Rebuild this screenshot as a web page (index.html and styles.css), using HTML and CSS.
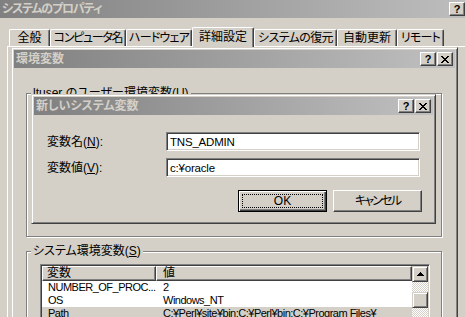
FILE: index.html
```html
<!DOCTYPE html>
<html lang="ja">
<head>
<meta charset="utf-8">
<title>システムのプロパティ</title>
<link rel="stylesheet" href="styles.css">
</head>
<body>
<div class="win">
  <div class="caption main-cap">
    <span class="cap-text tight">システムのプロパティ</span>
    <span class="cap-btns">
      <span class="cbtn help">?</span>
      <span class="cbtn"><svg width="8" height="7" viewBox="0 0 8 7"><path d="M0 0h2v1H0zM6 0h2v1H6zM1 1h2v1H1zM5 1h2v1H5zM2 2h4v1H2zM3 3h2v1H3zM2 4h4v1H2zM1 5h2v1H1zM5 5h2v1H5zM0 6h2v1H0zM6 6h2v1H6z" fill="#000"/></svg></span>
    </span>
  </div>
  <div class="tabs">
    <div class="tab t1">全般</div>
    <div class="tab t2">コンピュータ名</div>
    <div class="tab t3">ハードウェア</div>
    <div class="tab t4 sel">詳細設定</div>
    <div class="tab t5">システムの復元</div>
    <div class="tab t6">自動更新</div>
    <div class="tab t7">リモート</div>
  </div>
  <div class="panel"></div>
</div>

<div class="dlg env">
  <div class="caption">
    <span class="cap-text">環境変数</span>
    <span class="cap-btns">
      <span class="cbtn help">?</span>
      <span class="cbtn"><svg width="8" height="7" viewBox="0 0 8 7"><path d="M0 0h2v1H0zM6 0h2v1H6zM1 1h2v1H1zM5 1h2v1H5zM2 2h4v1H2zM3 3h2v1H3zM2 4h4v1H2zM1 5h2v1H1zM5 5h2v1H5zM0 6h2v1H0zM6 6h2v1H6z" fill="#000"/></svg></span>
    </span>
  </div>
  <div class="env-body">
    <div class="group user">
      <span class="legend">ltuser のユーザー環境変数(<u>U</u>)</span>
    </div>
    <div class="group sys">
      <span class="legend">システム環境変数(<u>S</u>)</span>
      <div class="list">
        <div class="lv">
          <div class="lv-head">
            <span class="hcell h1">変数</span>
            <span class="hcell h2">値</span>
          </div>
          <div class="lv-row"><span class="c1">NUMBER_OF_PROC...</span><span class="c2">2</span></div>
          <div class="lv-row"><span class="c1">OS</span><span class="c2">Windows_NT</span></div>
          <div class="lv-row sel"><span class="c1">Path</span><span class="c2">C:¥Perl¥site¥bin;C:¥Perl¥bin;C:¥Program Files¥</span></div>
        </div>
        <div class="vscroll">
          <div class="sbtn"><svg width="7" height="4" viewBox="0 0 7 4"><path d="M3 0h1v1h1v1h1v1h1v1H0V3h1V2h1V1h1z" fill="#000"/></svg></div>
          <div class="track"></div>
          <div class="thumb"></div>
          <div class="track rest"></div>
        </div>
      </div>
    </div>
  </div>
</div>

<div class="dlg newvar">
  <div class="caption">
    <span class="cap-text">新しいシステム変数</span>
    <span class="cap-btns">
      <span class="cbtn help">?</span>
      <span class="cbtn"><svg width="8" height="7" viewBox="0 0 8 7"><path d="M0 0h2v1H0zM6 0h2v1H6zM1 1h2v1H1zM5 1h2v1H5zM2 2h4v1H2zM3 3h2v1H3zM2 4h4v1H2zM1 5h2v1H1zM5 5h2v1H5zM0 6h2v1H0zM6 6h2v1H6z" fill="#000"/></svg></span>
    </span>
  </div>
  <div class="form">
    <label class="lbl">変数名(<u>N</u>):</label>
    <div class="edit">TNS_ADMIN</div>
    <label class="lbl">変数値(<u>V</u>):</label>
    <div class="edit">c:¥oracle</div>
  </div>
  <div class="buttons">
    <div class="btn default"><span class="focus">OK</span></div>
    <div class="btn cancel">キャンセル</div>
  </div>
</div>
</body>
</html>
```

FILE: styles.css
```css
* { box-sizing: border-box; margin: 0; padding: 0; }
html, body { width: 465px; height: 317px; overflow: hidden; }
body {
  background: #d4d0c8;
  font-family: "Liberation Sans", "Noto Sans CJK JP", sans-serif;
  font-feature-settings: "palt";
  font-size: 12px;
  line-height: 14px;
  color: #000;
  position: relative;
}

/* outer window */
.win { width: 484px; height: 317px; display: flex; flex-direction: column; }
.caption {
  height: 18px;
  flex: none;
  display: flex;
  align-items: center;
  justify-content: space-between;
  background: linear-gradient(to right, #808080, #c0c0c0);
  padding: 0 2px 0 2px;
}
.cap-text { color: #d4d0c8; font-weight: bold; font-size: 12px; line-height: 14px; white-space: nowrap; }
.cap-text.tight { letter-spacing: -1.2px; }
.cap-btns { display: flex; gap: 1px; }
.cbtn {
  width: 16px; height: 14px;
  background: #d4d0c8;
  border: 1px solid;
  border-color: #fff #404040 #404040 #fff;
  box-shadow: inset -1px -1px #808080;
  display: flex; align-items: center; justify-content: center;
}
.help { font-family: "Liberation Sans", sans-serif; font-weight: bold; font-size: 11px; line-height: 1; }

.tabs { display: flex; align-items: flex-end; height: 19px; margin-top: 9px; padding-left: 9px; flex: none; }
.tab {
  height: 17px;
  border-top: 1px solid #fff;
  border-left: 1px solid #fff;
  border-right: 1px solid #404040;
  box-shadow: inset -1px 0 #808080;
  border-radius: 2px 2px 0 0;
  display: flex; align-items: center; justify-content: center;
  white-space: nowrap;
  background: #d4d0c8;
}
.t1 { width: 41px; }
.t2 { width: 76px; letter-spacing: -1.3px; }
.t3 { width: 66px; letter-spacing: -0.8px; }
.t4 { width: 62px; }
.t5 { width: 83px; letter-spacing: -0.6px; }
.t6 { width: 60px; }
.t7 { width: 47px; letter-spacing: -0.8px; }
.tab.sel { height: 20px; margin-bottom: -1px; position: relative; z-index: 1; padding-bottom: 2px; }
.panel { flex: 1; margin-left: 7px; border-top: 1px solid #fff; border-left: 1px solid #fff; }

/* dialogs */
.dlg {
  position: absolute;
  background: #d4d0c8;
  border: 1px solid;
  border-color: #d4d0c8 #404040 #404040 #d4d0c8;
  box-shadow: inset 1px 1px #fff, inset -1px -1px #808080;
  padding: 2px;
  display: flex; flex-direction: column;
}
.dlg .caption { margin-bottom: 1px; padding-left: 2px; }
.env { left: 11px; top: 47px; width: 447px; height: 300px; }
.env-body { padding-left: 12px; padding-top: 24px; }

.group {
  position: relative;
  border: 1px solid #808080;
  box-shadow: 1px 1px 0 #fff, inset 1px 1px 0 #fff;
  width: 416px;
}
.legend {
  position: absolute;
  top: -8px; left: 4px;
  padding: 0 2px;
  line-height: 14px;
  background: #d4d0c8;
  white-space: nowrap;
}
.user { height: 144px; }
.sys { margin-top: 14px; height: 120px; padding: 12px 0 0 13px; }

.list {
  width: 390px; height: 80px;
  display: flex;
  background: #fff;
  border: 1px solid;
  border-color: #808080 #fff #fff #808080;
  box-shadow: inset 1px 1px #404040, inset -1px -1px #d4d0c8;
  padding: 1px;
}
.lv { flex: 1; display: flex; flex-direction: column; min-width: 0; }
.lv-head { display: flex; height: 15px; flex: none; }
.hcell {
  background: #d4d0c8;
  border: 1px solid;
  border-color: #fff #404040 #404040 #fff;
  box-shadow: inset -1px -1px #808080;
  line-height: 12px;
  white-space: nowrap;
}
.h1 { width: 114px; padding-left: 4px; }
.h2 { flex: 1; padding-left: 6px; }
.lv-row {
  display: flex; height: 13px; line-height: 13px; white-space: nowrap; flex: none;
  font-size: 11px; letter-spacing: -0.5px;
}
.lv-row.sel { background: #d4d0c8; }
.c1 { width: 114px; flex: none; padding-left: 6px; }
.c2 { padding-left: 7px; }

.vscroll { width: 16px; display: flex; flex-direction: column; flex: none; }
.sbtn, .thumb {
  width: 16px; height: 16px; flex: none;
  background: #d4d0c8;
  border: 1px solid;
  border-color: #d4d0c8 #404040 #404040 #d4d0c8;
  box-shadow: inset 1px 1px #fff, inset -1px -1px #808080;
  display: flex; align-items: center; justify-content: center;
}
.track { height: 10px; flex: none; background: repeating-conic-gradient(#fff 0 25%, #d4d0c8 0 50%) 0 0 / 2px 2px; }
.track.rest { flex: 1; }

.newvar { left: 31px; top: 94px; width: 405px; height: 130px; }
.form {
  display: grid;
  grid-template-columns: 119px 254px;
  row-gap: 7px;
  align-items: center;
  padding-left: 13px;
  margin-top: 16px;
}
.lbl { white-space: nowrap; }
.edit {
  height: 19px;
  background: #fff;
  border: 1px solid;
  border-color: #808080 #fff #fff #808080;
  box-shadow: inset 1px 1px #404040, inset -1px -1px #d4d0c8;
  padding-left: 3px;
  display: flex; align-items: center;
  white-space: nowrap;
  font-size: 11.5px;
  letter-spacing: -0.2px;
}
.buttons { display: flex; justify-content: flex-end; gap: 6px; margin-top: 13px; padding-right: 11px; }
.btn {
  width: 89px; height: 22px;
  border: 1px solid;
  border-color: #fff #404040 #404040 #fff;
  box-shadow: inset -1px -1px #808080;
  display: flex; align-items: center; justify-content: center;
  white-space: nowrap;
}
.btn.cancel { letter-spacing: -1.8px; }
.btn.default {
  border: 1px solid #000;
  box-shadow: inset 1px 1px #fff, inset -1px -1px #404040, inset -2px -2px #808080;
  padding: 3px;
}
.focus {
  flex: 1; align-self: stretch;
  border: 1px dotted #000;
  display: flex; align-items: center; justify-content: center;
  line-height: 12px;
}
```
